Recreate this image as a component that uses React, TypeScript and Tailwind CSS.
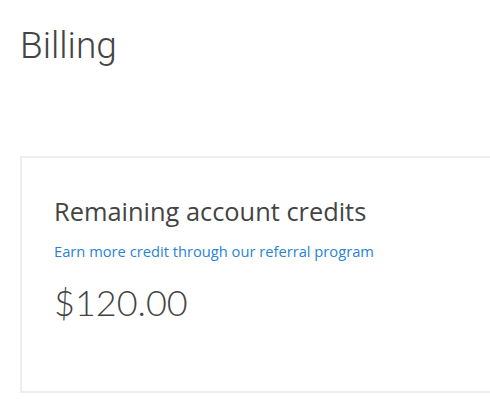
export default function App() {
  return (
    <div className="min-h-[415px] w-[490px] overflow-hidden bg-white pl-5 pt-[24px] font-['Lato',sans-serif] text-[#444]">
      <h1 className="text-[37px] leading-[44px] font-light font-['Roboto',sans-serif]">Billing</h1>

      <div className="mt-[88px] w-[600px] border-2 border-[#eeeeee] px-8 pt-[37px] pb-[67px]">
        <h2 className="font-['Open_Sans',sans-serif] text-[25.4px] leading-[32px]">Remaining account credits</h2>
        <a href="#" className="mt-[14px] block font-['Open_Sans',sans-serif] text-[14.7px] leading-[20px] text-[#2a83d6]">
          Earn more credit through our referral program
        </a>
        <div className="mt-[19px] text-[36px] leading-[44px] font-light">$120.00</div>
      </div>
    </div>
  );
}
